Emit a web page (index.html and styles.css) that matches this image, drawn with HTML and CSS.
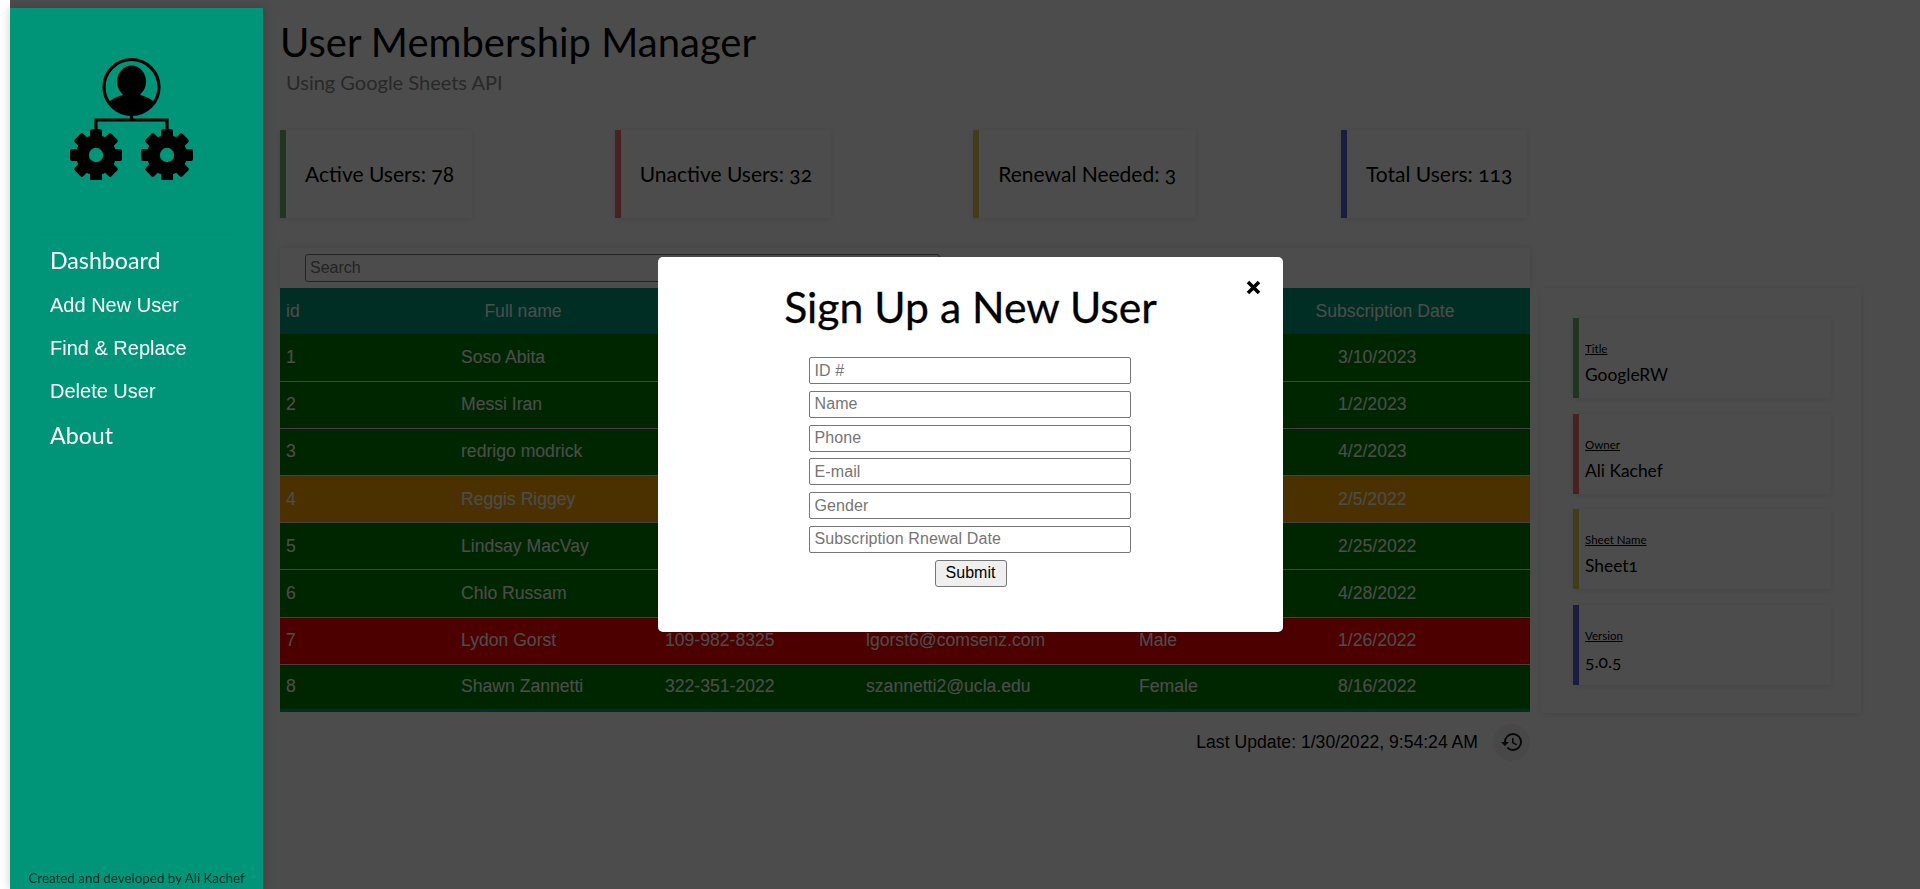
FILE: index.html
```html
<!DOCTYPE html>
<html lang="en">
<head>
<meta charset="utf-8">
<title>User Membership Manager</title>
<link rel="stylesheet" href="styles.css">
</head>
<body>
<div class="app">
  <aside class="sidebar">
    <div class="logo">
      <svg class="logo-icon" viewBox="0 0 130 130" aria-hidden="true">
        <defs>
          <g id="gear">
            <circle r="20"></circle>
            <g>
              <rect x="-6" y="-26" width="12" height="52" rx="2"></rect>
              <rect x="-26" y="-6" width="52" height="12" rx="2"></rect>
              <rect x="-6" y="-26" width="12" height="52" rx="2" transform="rotate(45)"></rect>
              <rect x="-6" y="-26" width="12" height="52" rx="2" transform="rotate(-45)"></rect>
            </g>
            <circle class="gear-hole" r="7.2"></circle>
          </g>
          <clipPath id="portrait"><circle cx="64.5" cy="37" r="26.5"></circle></clipPath>
        </defs>
        <circle class="ring" cx="64.5" cy="37" r="27.5"></circle>
        <g clip-path="url(#portrait)">
          <ellipse cx="64.5" cy="31.5" rx="14.5" ry="16"></ellipse>
          <rect x="55.5" y="37" width="18" height="12"></rect>
          <ellipse cx="64.5" cy="67" rx="30" ry="23"></ellipse>
        </g>
        <path class="link" d="M64.5 64 V70 M29 82 V70 H100 V82"></path>
        <use href="#gear" x="29" y="105"></use>
        <use href="#gear" x="100" y="105"></use>
      </svg>
    </div>
    <nav class="nav">
      <a class="nav-big nav-first" href="#">Dashboard</a>
      <a href="#">Add New User</a>
      <a href="#">Find &amp; Replace</a>
      <a href="#">Delete User</a>
      <a class="nav-big" href="#">About</a>
    </nav>
    <p class="credit">Created and developed by Ali Kachef</p>
  </aside>

  <main class="main">
    <header class="page-head">
      <h1>User Membership Manager</h1>
      <p>Using Google Sheets API</p>
    </header>

    <section class="stats">
      <div class="stat stat-green stat-active">Active Users: 78</div>
      <div class="stat stat-red stat-inactive">Unactive Users: 32</div>
      <div class="stat stat-yellow stat-renewal">Renewal Needed: 3</div>
      <div class="stat stat-blue stat-total">Total Users: 113</div>
    </section>

    <div class="content">
      <section class="records">
        <div class="toolbar"><input class="search" type="text" placeholder="Search"></div>
        <table class="users">
          <thead>
            <tr>
              <th class="col-id">id</th>
              <th class="col-name">Full name</th>
              <th class="col-phone"></th>
              <th class="col-mail"></th>
              <th class="col-gender"></th>
              <th class="col-date">Subscription Date</th>
            </tr>
          </thead>
          <tbody>
            <tr class="ok"><td>1</td><td class="name">Soso Abita</td><td></td><td></td><td></td><td class="date">3/10/2023</td></tr>
            <tr class="ok"><td>2</td><td class="name">Messi Iran</td><td></td><td></td><td></td><td class="date">1/2/2023</td></tr>
            <tr class="ok"><td>3</td><td class="name">redrigo modrick</td><td></td><td></td><td></td><td class="date">4/2/2023</td></tr>
            <tr class="warn"><td>4</td><td class="name">Reggis Riggey</td><td></td><td></td><td></td><td class="date">2/5/2022</td></tr>
            <tr class="ok"><td>5</td><td class="name">Lindsay MacVay</td><td></td><td></td><td></td><td class="date">2/25/2022</td></tr>
            <tr class="ok"><td>6</td><td class="name">Chlo Russam</td><td></td><td></td><td></td><td class="date">4/28/2022</td></tr>
            <tr class="off"><td>7</td><td class="name">Lydon Gorst</td><td class="phone">109-982-8325</td><td class="mail">lgorst6@comsenz.com</td><td class="gender">Male</td><td class="date">1/26/2022</td></tr>
            <tr class="ok"><td>8</td><td class="name">Shawn Zannetti</td><td class="phone">322-351-2022</td><td class="mail">szannetti2@ucla.edu</td><td class="gender">Female</td><td class="date">8/16/2022</td></tr>
          </tbody>
        </table>
        <div class="updated">
          <span>Last Update: 1/30/2022, 9:54:24 AM</span>
          <button class="refresh" type="button" aria-label="History">
            <svg viewBox="0 0 24 24" aria-hidden="true"><path d="M13 3a9 9 0 0 0-9 9H1l3.89 3.89.07.14L9 12H6c0-3.87 3.13-7 7-7s7 3.13 7 7-3.13 7-7 7c-1.93 0-3.68-.79-4.94-2.06l-1.42 1.42A8.954 8.954 0 0 0 13 21a9 9 0 0 0 0-18zm-1 5v5l4.28 2.54.72-1.21-3.5-2.08V8H12z"></path></svg>
          </button>
        </div>
      </section>

      <aside class="info">
        <div class="info-card stat-green"><u>Title</u><span>GoogleRW</span></div>
        <div class="info-card stat-red"><u>Owner</u><span>Ali Kachef</span></div>
        <div class="info-card stat-yellow"><u>Sheet Name</u><span>Sheet1</span></div>
        <div class="info-card stat-blue"><u>Version</u><span>5.0.5</span></div>
      </aside>
    </div>
  </main>
</div>

<div class="overlay">
  <div class="modal">
    <button class="close" type="button" aria-label="Close">
      <svg viewBox="0 0 15 15" aria-hidden="true"><path d="M2 2 L13 13 M13 2 L2 13"></path></svg>
    </button>
    <h2>Sign Up a New User</h2>
    <form class="signup">
      <input type="text" placeholder="ID #">
      <input type="text" placeholder="Name">
      <input type="text" placeholder="Phone">
      <input type="text" placeholder="E-mail">
      <input type="text" placeholder="Gender">
      <input type="text" placeholder="Subscription Rnewal Date">
      <button class="submit" type="button">Submit</button>
    </form>
  </div>
</div>
</body>
</html>
```
FILE: styles.css
```css
* { box-sizing: border-box; }
html, body { height: 100%; }
body {
  margin: 0;
  padding: 8px 0 0 10px;
  background: #fff;
  color: #000;
  font-family: "Liberation Sans", Arial, sans-serif;
  overflow: hidden;
}
.app { display: flex; height: 100%; }

/* sidebar */
.sidebar {
  position: relative;
  z-index: 3;
  flex: 0 0 253px;
  display: flex;
  flex-direction: column;
  background: #009578;
  box-shadow: 0 0 10px rgba(0, 0, 0, .2);
}
.logo {
  display: flex;
  justify-content: center;
  flex: 0 0 225px;
  margin: 0 30px;
  padding-top: 42px;
  box-shadow: 0 3px 3px -2px rgba(0, 0, 0, .03);
}
.logo-icon { display: block; width: 130px; height: 130px; margin-right: 10px; }
.ring { fill: none; stroke: #000; stroke-width: 3.2; }
.link { fill: none; stroke: #000; stroke-width: 3.2; }
.gear-hole { fill: #009578; }
.nav { display: flex; flex-direction: column; padding: 4px 0 0 40px; }
.nav a { color: #fff; text-decoration: none; font-size: 20px; line-height: 43px; }
.nav .nav-big { font-family: Lato, sans-serif; font-size: 23.2px; line-height: 44px; }
.nav .nav-first { line-height: 47px; }
.credit {
  margin: auto 0 3px;
  text-align: center;
  font-family: Lato, sans-serif;
  font-size: 13.4px;
  line-height: 16px;
  color: rgba(0, 0, 0, .7);
}

/* main column */
.main { flex: 1; padding: 0 0 0 17px; min-width: 0; }
.page-head { height: 122px; font-family: Lato, sans-serif; }
.page-head h1 { margin: 0; padding-top: 9px; font-size: 40px; line-height: 50px; font-weight: 400; }
.page-head p { margin: 0; padding: 3px 0 0 6px; font-size: 20px; line-height: 24px; color: #888; }

.stats { display: flex; justify-content: space-between; width: 1247px; }
.stat {
  height: 88px;
  display: flex;
  align-items: center;
  padding: 0 0 2px 19px;
  border-left: 6px solid;
  background: #fff;
  box-shadow: 0 1px 7px rgba(0, 0, 0, .1);
  font-family: Lato, sans-serif;
  font-size: 21px;
  font-variant-numeric: oldstyle-nums;
}
.stat-active { width: 192px; }
.stat-inactive { width: 216px; }
.stat-renewal { width: 223px; margin-right: 2px; }
.stat-total { width: 186px; }
.stat-green { border-left-color: #6db56d; }
.stat-red { border-left-color: #f07070; }
.stat-yellow { border-left-color: #dcc85a; }
.stat-blue { border-left-color: #5b63cf; }

.content { display: flex; gap: 11px; margin-top: 30px; align-items: flex-start; }
.records { flex: 0 0 1250px; }
.toolbar {
  height: 40px;
  padding: 6px 0 0 25px;
  box-shadow: 0 0 8px rgba(0, 0, 0, .12);
}
.search {
  display: block;
  width: 635px;
  height: 28px;
  padding: 1px 4px;
  border: 1px solid #767676;
  border-radius: 3px;
  font: 16px "Liberation Sans", Arial, sans-serif;
}

.users {
  position: relative;
  width: 1250px;
  table-layout: fixed;
  border-collapse: collapse;
  border-bottom: 3px solid #009879;
  font-size: 17.6px;
  color: #fff;
}
.users th { height: 46px; padding: 0 6px; background: #009879; font-weight: 400; }
.users td { height: 47.2px; padding: 0 0 0 6px; border-bottom: 1px solid #ddd; }
.users tr:last-child td { height: 46px; border-bottom: 0; }
.col-id { width: 165px; text-align: left; }
.col-name { width: 156px; }
.col-phone { width: 205px; }
.col-mail { width: 254px; }
.col-gender { width: 180px; }
.col-date { width: 290px; }
.users .name { padding-left: 16px; white-space: nowrap; }
.users .phone { padding-left: 64px; white-space: nowrap; }
.users .mail { padding-left: 60px; white-space: nowrap; }
.users .gender { padding-left: 79px; }
.users .date { padding-left: 98px; }
.ok td { background: #008000; }
.warn td { background: #ffa500; }
.off td { background: #f00; }

.updated { display: flex; justify-content: flex-end; align-items: center; gap: 15px; margin-top: 12px; font-size: 17.6px; }
.refresh {
  display: flex;
  align-items: center;
  justify-content: center;
  width: 37px;
  height: 37px;
  padding: 0;
  border: 0;
  border-radius: 50%;
  background: rgba(0, 0, 0, .06);
}
.refresh svg { width: 24px; height: 24px; fill: rgba(0, 0, 0, .9); }

.info {
  flex: 0 0 320px;
  margin-top: 40px;
  height: 425px;
  padding: 30px 30px 0 32px;
  box-shadow: 0 1px 7px rgba(0, 0, 0, .1);
}
.info-card {
  display: flex;
  flex-direction: column;
  justify-content: flex-end;
  height: 80px;
  margin-bottom: 15.5px;
  padding: 0 0 12px 6px;
  border-left-width: 6px;
  border-left-style: solid;
  box-shadow: 0 1px 7px rgba(0, 0, 0, .1);
  font-family: Lato, sans-serif;
}
.info-card u { font-size: 11.5px; line-height: 14px; margin-bottom: 8px; }
.info-card span { font-size: 17.4px; line-height: 22px; font-variant-numeric: oldstyle-nums; }

/* modal */
.overlay {
  position: fixed;
  z-index: 2;
  inset: 0 0 0 10px;
  display: flex;
  align-items: center;
  justify-content: center;
  padding-left: 11px;
  background: rgba(0, 0, 0, .7);
}
.modal {
  position: relative;
  width: 625px;
  height: 375px;
  padding-top: 25px;
  border-radius: 5px;
  background: #fff;
  text-align: center;
}
.modal h2 {
  margin: 0 0 25px;
  font-family: Lato, sans-serif;
  font-size: 42.7px;
  line-height: 50px;
  font-weight: 400;
  -webkit-text-stroke: .3px #000;
}
.close {
  position: absolute;
  top: 23px;
  right: 22px;
  width: 15px;
  height: 15px;
  padding: 0;
  border: 0;
  background: none;
}
.close svg { display: block; fill: none; stroke: #000; stroke-width: 3.6; }
.signup { display: flex; flex-direction: column; align-items: center; padding-right: 2px; }
.signup input {
  width: 322px;
  height: 27px;
  margin-bottom: 6.8px;
  padding: 1px 5px;
  border: 1px solid #767676;
  border-radius: 2px;
  font: 16px "Liberation Sans", Arial, sans-serif;
  letter-spacing: .1px;
}
.submit {
  width: 72px;
  height: 27px;
  margin-left: 2px;
  padding: 0;
  border: 1px solid #767676;
  border-radius: 3px;
  background: #efefef;
  font: 16px "Liberation Sans", Arial, sans-serif;
}
```
